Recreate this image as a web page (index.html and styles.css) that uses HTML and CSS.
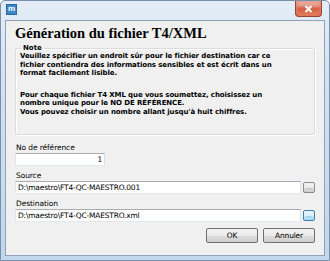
FILE: index.html
```html
<!DOCTYPE html>
<html lang="fr">

<head>
    <meta charset="UTF-8">
    <title>Génération du fichier T4/XML</title>
    <link rel="stylesheet" href="styles.css">
</head>

<body>
    <div class="window">
        <!-- barre de titre -->
        <div class="titlebar">
            <span class="app-icon">m</span>
            <div class="close-btn">
                <svg width="9" height="8" viewBox="0 0 9 8">
                    <path d="M1.5 1 L7.5 7 M7.5 1 L1.5 7" stroke="#ffffff" stroke-width="2" />
                </svg>
            </div>
        </div>

        <div class="client">
            <h1 class="heading">Génération du fichier T4/XML</h1>

            <!-- note -->
            <fieldset class="note">
                <legend>Note</legend>
                <p>Veuillez spécifier un endroit sûr pour le fichier destination car ce<br>fichier contiendra des
                    informations sensibles et est écrit dans un<br>format facilement lisible.</p>
                <p class="second">Pour chaque fichier T4 XML que vous soumettez, choisissez un<br>nombre unique pour le
                    NO DE RÉFÉRENCE.<br>Vous pouvez choisir un nombre allant jusqu'à huit chiffres.</p>
            </fieldset>

            <div class="field">
                <label>No de référence</label>
                <div class="input small right">1</div>
            </div>

            <div class="field">
                <label>Source</label>
                <div class="row">
                    <div class="input">D:\maestro\FT4-QC-MAESTRO.001</div>
                    <button class="browse">...</button>
                </div>
            </div>

            <div class="field">
                <label>Destination</label>
                <div class="row">
                    <div class="input">D:\maestro\FT4-QC-MAESTRO.xml</div>
                    <button class="browse active">...</button>
                </div>
            </div>

            <div class="actions">
                <button class="btn">OK</button>
                <button class="btn">Annuler</button>
            </div>
        </div>
    </div>
</body>

</html>
```

FILE: styles.css
```css
/* base */
body {
    margin: 0;
    font-family: "Liberation Sans", Arial, sans-serif;
    background: #ffffff;
}

/* fenêtre */
.window {
    width: 330px;
    height: 261px;
    box-sizing: border-box;
    border: 1px solid #7890ab;
    border-radius: 5px 5px 0 0;
    background: linear-gradient(to bottom, #e4edf7 0%, #d3e2f2 30%, #c2d6ec 100%);
    padding: 0 4px 4px 4px;
    display: flex;
    flex-direction: column;
}

.titlebar {
    height: 19px;
    display: flex;
    align-items: flex-start;
    justify-content: space-between;
}

.app-icon {
    margin: 3px 0 0 1px;
    width: 9px;
    height: 9px;
    background: #3d86c6;
    border: 1px solid #2a68a3;
    color: #fff;
    font-size: 8px;
    font-weight: bold;
    line-height: 8px;
    text-align: center;
}

.close-btn {
    margin-right: 3px;
    width: 27px;
    height: 16px;
    box-sizing: border-box;
    border: 1px solid #9a4434;
    border-top-width: 0;
    border-radius: 0 0 4px 4px;
    background: #d4573c;
    box-shadow: inset 0 -5px 4px #e07a5a, inset 0 6px 3px #e8a493;
    display: flex;
    align-items: center;
    justify-content: center;
}

.client {
    flex: 1;
    background: #f0f0f0;
    border: 1px solid #8ea3bb;
    padding: 0 9px 0 9px;
    font-size: 8px;
    color: #000;
}

.heading {
    font-family: "Liberation Serif", "Times New Roman", serif;
    font-size: 14.5px;
    font-weight: bold;
    margin: 4px 0 0 0;
    line-height: 17px;
}

/* note */
.note {
    margin: 0;
    margin-top: 2px;
    border: 1px solid #dcdcdc;
    border-radius: 2px;
    box-shadow: inset 1px 1px 0 #ffffff, 1px 1px 0 #ffffff;
    padding: 0 4px 0 4px;
    height: 91px;
    box-sizing: border-box;
}

.note legend {
    font-family: "DejaVu Sans", sans-serif;
    font-weight: bold;
    font-size: 7px;
    padding: 0 2px;
    margin-left: 1px;
}

.note p {
    font-family: "DejaVu Sans", sans-serif;
    font-weight: bold;
    font-size: 7px;
    letter-spacing: -0.1px;
    line-height: 8.6px;
    margin: 0;
    white-space: nowrap;
}

.note p.second {
    margin-top: 13px;
}

/* champs */
.field {
    margin-top: 8px;
}

.field + .field {
    margin-top: 5px;
}

.field label {
    display: block;
    font-family: "DejaVu Sans", sans-serif;
    font-size: 7.5px;
    letter-spacing: -0.1px;
    line-height: 10px;
    margin-left: 1px;
}

.row {
    display: flex;
    gap: 2px;
    align-items: center;
}

.input {
    flex: 1;
    height: 11px;
    border: 1px solid #abadb3;
    border-color: #abadb3 #dbdfe6 #e3e9ef #e2e3ea;
    background: #ffffff;
    font-family: "DejaVu Sans", sans-serif;
    font-size: 7.5px;
    letter-spacing: -0.2px;
    line-height: 11px;
    padding: 0 2px;
}

.input.small {
    width: 84px;
    flex: none;
}

.input.right {
    text-align: right;
}

.browse {
    width: 12px;
    height: 11px;
    padding: 0;
    border: 1px solid #8a8a8a;
    border-radius: 2px;
    background: linear-gradient(to bottom, #f2f2f2 0%, #ebebeb 50%, #dddddd 51%, #cfcfcf 100%);
    font-size: 6px;
    line-height: 5px;
    color: #555;
}

.browse.active {
    border-color: #3c7fb1;
    background: linear-gradient(to bottom, #eaf6fd 0%, #d9f0fc 50%, #bee6fd 51%, #a7d9f5 100%);
}

/* boutons */
.actions {
    display: flex;
    justify-content: flex-end;
    gap: 5px;
    margin-top: 6px;
}

.btn {
    width: 52px;
    height: 15px;
    padding: 0;
    border: 1px solid #707070;
    border-radius: 2px;
    background: linear-gradient(to bottom, #f2f2f2 0%, #ebebeb 50%, #dddddd 51%, #cfcfcf 100%);
    font-family: "DejaVu Sans", sans-serif;
    font-size: 7.5px;
    letter-spacing: -0.2px;
    color: #000;
}
```
